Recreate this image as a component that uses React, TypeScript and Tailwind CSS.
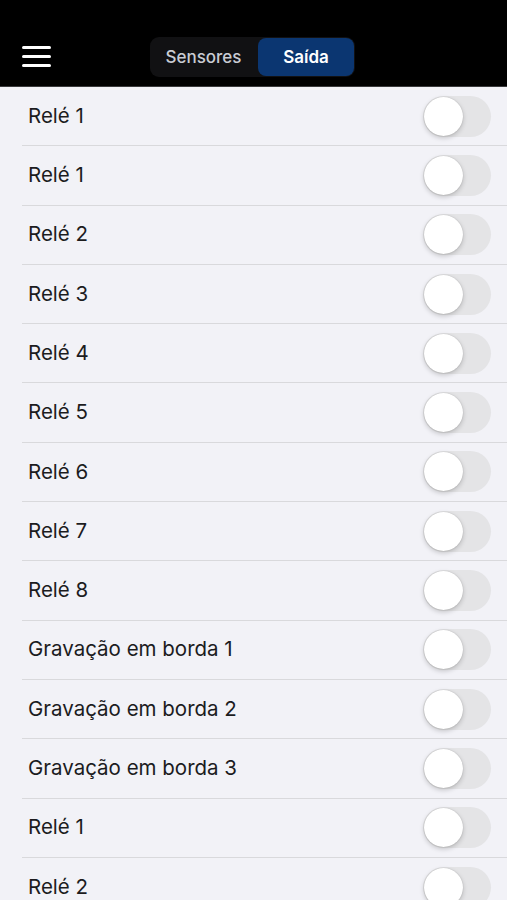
const rows = [
  "Relé 1",
  "Relé 1",
  "Relé 2",
  "Relé 3",
  "Relé 4",
  "Relé 5",
  "Relé 6",
  "Relé 7",
  "Relé 8",
  "Gravação em borda 1",
  "Gravação em borda 2",
  "Gravação em borda 3",
  "Relé 1",
  "Relé 2",
]

const Toggle = () => (
  <div className="relative w-[68px] h-[41px] rounded-full bg-[#e4e4e6]">
    <div className="absolute left-[1px] top-[1px] w-[39px] h-[39px] rounded-full bg-white shadow-[0_2px_5px_rgba(0,0,0,0.2),0_0_1px_rgba(0,0,0,0.25)]" />
  </div>
)

export default function App() {
  return (
    <div
      className="w-[507px] h-[900px] overflow-hidden bg-[#f2f2f7]"
      style={{ fontFamily: "Inter, 'Noto Sans', sans-serif" }}
    >
      <div className="h-[87px] bg-black flex items-end pb-[9px] relative border-b border-[#3a3a3c]">
        <div className="absolute left-[22px] top-[46px] flex flex-col gap-[6.5px]">
          <div className="w-[29px] h-[2.5px] bg-white rounded-full" />
          <div className="w-[29px] h-[2.5px] bg-white rounded-full" />
          <div className="w-[29px] h-[2.5px] bg-white rounded-full" />
        </div>
        <div className="ml-[150px] w-[205px] h-[40px] rounded-[9px] bg-[#111113] flex items-center p-[1px]">
          <div className="flex-1 h-full flex items-center justify-center pr-[2px] pt-[1px] text-[17px] text-[#c9ccd3] font-medium">
            Sensores
          </div>
          <div className="w-[96px] h-[38px] rounded-[8px] bg-[#0b3671] flex items-center justify-center pt-[1px] text-[17px] text-white font-semibold">
            Saída
          </div>
        </div>
      </div>
      <div>
        {rows.map((label, idx) => (
          <div key={idx} className="h-[59.3px] pl-[22px]">
            <div className="h-full flex items-center justify-between border-b border-[#d9d9dc] pl-[6px] pr-[16px]">
              <span className="text-[20.5px] text-[#1c1c1e]">{label}</span>
              <Toggle />
            </div>
          </div>
        ))}
      </div>
    </div>
  )
}
